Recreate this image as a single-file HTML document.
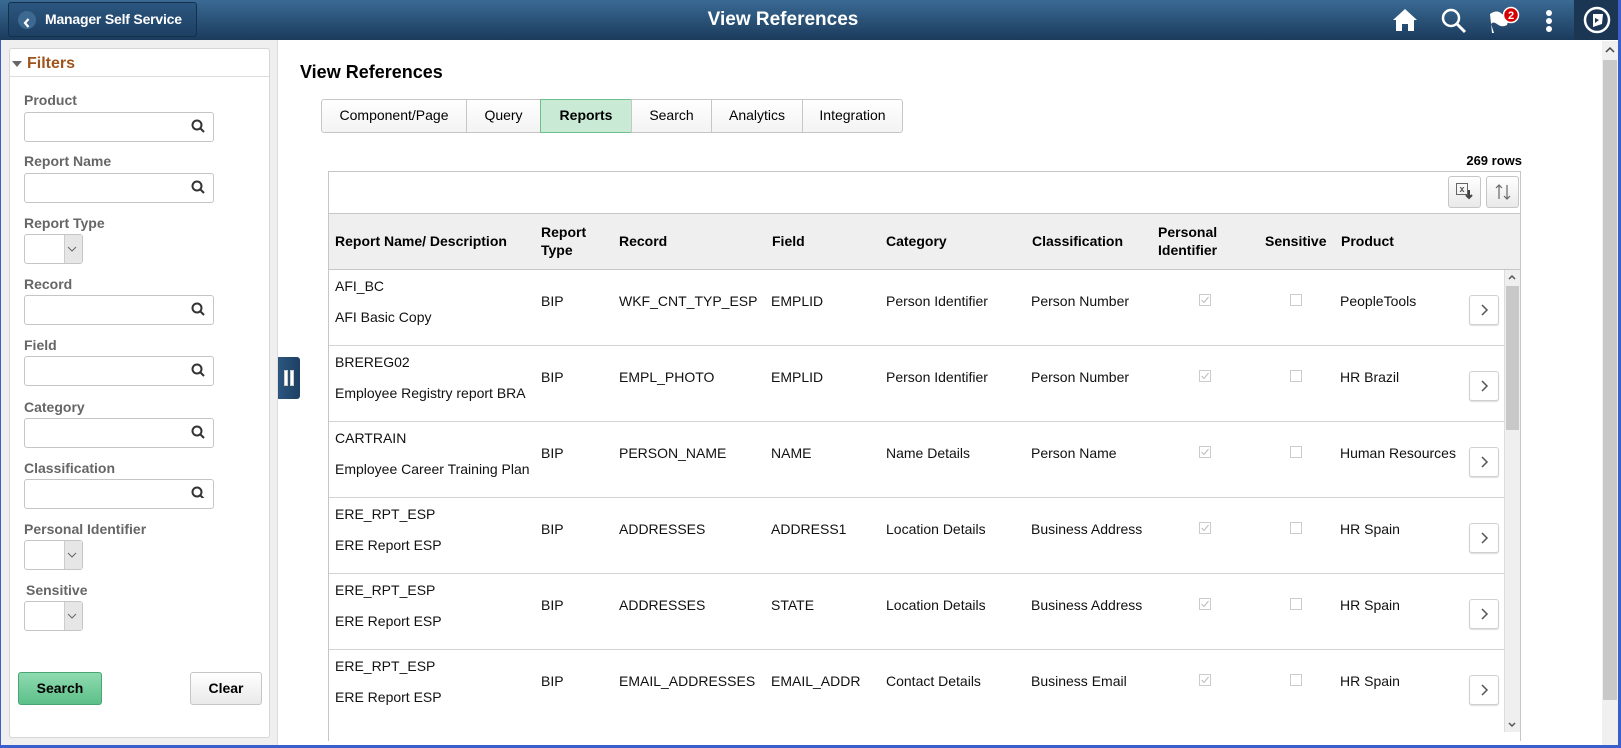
<!DOCTYPE html>
<html><head><meta charset="utf-8"><style>
*{box-sizing:border-box;margin:0;padding:0}
body{width:1621px;height:748px;overflow:hidden;font-family:"Liberation Sans",Arial,sans-serif;background:#fff;position:relative;font-size:14px;color:#000}
.abs{position:absolute}
#hdr{left:0;top:0;width:1618px;height:40px;background:linear-gradient(#3a6a94,#1b3b5c)}
#back{left:8px;top:2px;width:189px;height:35px;border:1px solid #13304c;border-radius:3px;background:linear-gradient(#2c5780,#1d3f62);color:#fff;font-weight:bold;font-size:14px;line-height:33px;padding-left:36px;white-space:nowrap;letter-spacing:-0.2px}
#back .c{position:absolute;left:9px;top:8px;width:18px;height:18px;border-radius:50%;background:#3d6890}
#title{left:0;width:1566px;top:0;text-align:center;color:#fff;font-weight:bold;font-size:19px;line-height:40px}
#left{left:0;top:40px;width:278px;height:708px;background:#efefef;border-right:1px solid #ddd}
#card{left:9px;top:48px;width:261px;height:690px;background:#fff;border:1px solid #d6d6d6;border-radius:3px}
.lbl{color:#666;font-weight:bold;font-size:14px}
.inp{width:190px;height:30px;border:1px solid #c5c5c5;border-radius:3px;background:#fff}
.sel{width:59px;height:30px;border:1px solid #c5c5c5;border-radius:3px;background:#fff}
.sel:after{content:"";position:absolute;right:0;top:0;width:17px;height:28px;background:#e6e6e6;border-left:1px solid #ccc}
.btn{border:1px solid #c6c6c6;border-radius:3px;background:linear-gradient(#fff,#e9e9e9);text-align:center;font-weight:bold;font-size:14px}
.tab{top:99px;height:34px;border:1px solid #c6c6c6;background:linear-gradient(#fff,#f3f3f3);font-size:14px;line-height:31px;text-align:center}
.th{font-weight:bold;font-size:14px;color:#000}
.cell{font-size:14px;color:#111}
.cb{width:12px;height:12px;border:1px solid #ccc;background:#fff}
.chev{width:30px;height:30px;border:1px solid #d0d0d0;border-radius:3px;background:#fff;box-shadow:0 1px 1px #ddd}
</style></head><body>
<div id="hdr" class="abs"></div>
<div id="title" class="abs">View References</div>
<div id="back" class="abs"><span class="c"><svg width="18" height="18" viewBox="0 0 18 18"><path d="M10.5 5 L7 9 L10.5 13" stroke="#fff" stroke-width="2.2" fill="none"/></svg></span>Manager Self Service</div>
<svg class="abs" style="left:1390px;top:6px" width="30" height="28" viewBox="0 0 30 28"><path d="M15 3 L3 14 L6 14 L6 25 L12 25 L12 18 L18 18 L18 25 L24 25 L24 14 L27 14 Z" fill="#fff"/></svg>
<svg class="abs" style="left:1439px;top:6px" width="30" height="28" viewBox="0 0 30 28"><circle cx="12" cy="12" r="8" stroke="#fff" stroke-width="2.5" fill="none"/><path d="M18 18 L26 26" stroke="#fff" stroke-width="3"/></svg>
<svg class="abs" style="left:1485px;top:6px" width="40" height="28" viewBox="0 0 40 28"><path d="M5 8 Q12 3 17 8 Q22 12 25 9 L22 19 Q17 22 12 18 Q8 15 6 18 L9 27 L7 27 Z" fill="#fff"/><circle cx="26" cy="9" r="7.5" fill="#d60000" stroke="#fff" stroke-width="1.5"/><text x="26" y="13" text-anchor="middle" fill="#fff" font-size="11" font-weight="bold" font-family="Liberation Sans">2</text></svg>
<div class="abs" style="left:1546px;top:10px;width:6px;height:6px;border-radius:50%;background:#fff;box-shadow:0 8px 0 #fff,0 16px 0 #fff"></div>
<div class="abs" style="left:1574px;top:0;width:44px;height:40px;background:#1a3653"></div>
<svg class="abs" style="left:1581px;top:4px" width="32" height="32" viewBox="0 0 32 32"><circle cx="16" cy="16" r="12" stroke="#fff" stroke-width="2.5" fill="none"/><path d="M12 10 L22 10 L21 20 L12 23 Z" fill="#fff"/><path d="M14 14 L18 16 L14 19 Z" fill="#1a3653"/></svg>

<div id="left" class="abs"></div>
<div id="card" class="abs"></div>
<div class="abs" style="left:10px;top:76px;width:259px;height:1px;background:#ddd"></div>
<div class="abs" style="left:12px;top:61px;width:0;height:0;border-left:5px solid transparent;border-right:5px solid transparent;border-top:6px solid #666"></div>
<div class="abs" style="left:27px;top:55px;color:#a0541c;font-weight:bold;font-size:16px">Filters</div>

<div class="abs lbl" style="left:24px;top:92px">Product</div><div class="abs inp" style="left:24px;top:112px"></div>
<div class="abs lbl" style="left:24px;top:153px">Report Name</div><div class="abs inp" style="left:24px;top:173px"></div>
<div class="abs lbl" style="left:24px;top:215px">Report Type</div><div class="abs sel" style="left:24px;top:234px"></div>
<div class="abs lbl" style="left:24px;top:276px">Record</div><div class="abs inp" style="left:24px;top:295px"></div>
<div class="abs lbl" style="left:24px;top:337px">Field</div><div class="abs inp" style="left:24px;top:356px"></div>
<div class="abs lbl" style="left:24px;top:399px">Category</div><div class="abs inp" style="left:24px;top:418px"></div>
<div class="abs lbl" style="left:24px;top:460px">Classification</div><div class="abs inp" style="left:24px;top:479px"></div>
<div class="abs lbl" style="left:24px;top:521px">Personal Identifier</div><div class="abs sel" style="left:24px;top:540px"></div>
<div class="abs lbl" style="left:26px;top:582px">Sensitive</div><div class="abs sel" style="left:24px;top:601px"></div>
<svg class="abs" style="left:190px;top:118px" width="16" height="300" viewBox="0 0 16 300"><g stroke="#333" stroke-width="2" fill="none"><circle cx="7" cy="7" r="4.5"/><path d="M10 10 L14 14"/><circle cx="7" cy="68" r="4.5"/><path d="M10 71 L14 75"/><circle cx="7" cy="190" r="4.5"/><path d="M10 193 L14 197"/><circle cx="7" cy="251" r="4.5"/><path d="M10 254 L14 258"/></g></svg>
<svg class="abs" style="left:190px;top:418px" width="16" height="80" viewBox="0 0 16 80"><g stroke="#333" stroke-width="2" fill="none"><circle cx="7" cy="13" r="4.5"/><path d="M10 16 L14 20"/><circle cx="7" cy="74" r="4.5"/><path d="M10 77 L14 81"/></g></svg>
<svg class="abs" style="left:65px;top:240px" width="14" height="380" viewBox="0 0 14 380"><g stroke="#666" stroke-width="1" fill="none"><path d="M3 7 L7 11 L11 7"/><path d="M3 313 L7 317 L11 313"/><path d="M3 374 L7 378 L11 374"/></g></svg>
<div class="abs btn" style="left:18px;top:672px;width:84px;height:33px;line-height:31px;background:linear-gradient(#8fdbb1,#5cbf88);border-color:#4aa574">Search</div>
<div class="abs btn" style="left:190px;top:672px;width:72px;height:33px;line-height:31px">Clear</div>

<div class="abs" style="left:278px;top:357px;width:22px;height:42px;background:linear-gradient(90deg,#2c5780,#1d3f62);border-radius:0 3px 3px 0"></div>
<div class="abs" style="left:284px;top:370px;width:4px;height:16px;background:#fff;border:1px solid #ccc"></div>
<div class="abs" style="left:290px;top:370px;width:4px;height:16px;background:#fff;border:1px solid #ccc"></div>

<div class="abs" style="left:300px;top:62px;font-weight:bold;font-size:18px">View References</div>
<div class="abs tab" style="left:321px;width:146px;border-radius:3px 0 0 3px">Component/Page</div>
<div class="abs tab" style="left:466px;width:75px">Query</div>
<div class="abs tab" style="left:540px;width:92px;background:#c9ebd6;border-color:#6cc08e;font-weight:bold">Reports</div>
<div class="abs tab" style="left:631px;width:81px">Search</div>
<div class="abs tab" style="left:711px;width:92px">Analytics</div>
<div class="abs tab" style="left:802px;width:101px;border-radius:0 3px 3px 0">Integration</div>
<div class="abs" style="left:1450px;top:153px;font-weight:bold;font-size:13px;width:72px;text-align:right">269 rows</div>

<div class="abs" style="left:328px;top:171px;width:1193px;height:570px;border:1px solid #c6c6c6;border-bottom:none"></div>
<div class="abs btn" style="left:1448px;top:176px;width:33px;height:32px"></div>
<div class="abs btn" style="left:1486px;top:176px;width:33px;height:32px"></div>
<svg class="abs" style="left:1454px;top:181px" width="22" height="22" viewBox="0 0 22 22"><rect x="2.5" y="2.5" width="11" height="11" fill="none" stroke="#666"/><text x="8" y="11" text-anchor="middle" font-size="9" font-weight="bold" fill="#555" font-family="Liberation Sans">x</text><path d="M15 9 L15 17 M12 14 L15 17 L18 14" stroke="#444" stroke-width="2" fill="none"/></svg>
<svg class="abs" style="left:1492px;top:181px" width="22" height="22" viewBox="0 0 22 22"><path d="M7 18 L7 4 M4 7 L7 4 L10 7 M15 4 L15 18 M12 15 L15 18 L18 15" stroke="#666" stroke-width="1.2" fill="none"/></svg>
<div class="abs" style="left:329px;top:213px;width:1191px;height:57px;background:#efefef;border-top:1px solid #c6c6c6;border-bottom:1px solid #c6c6c6"></div>
<div class="abs th" style="left:335px;top:233px">Report Name/ Description</div>
<div class="abs th" style="left:541px;top:223px;line-height:18px">Report<br>Type</div>
<div class="abs th" style="left:619px;top:233px">Record</div>
<div class="abs th" style="left:772px;top:233px">Field</div>
<div class="abs th" style="left:886px;top:233px">Category</div>
<div class="abs th" style="left:1032px;top:233px">Classification</div>
<div class="abs th" style="left:1158px;top:223px;line-height:18px">Personal<br>Identifier</div>
<div class="abs th" style="left:1265px;top:233px">Sensitive</div>
<div class="abs th" style="left:1341px;top:233px">Product</div>

<div id="rows"></div>
<div class="abs" style="left:1504px;top:270px;width:16px;height:462px;background:#efefef;border-left:1px solid #ddd"></div>
<div class="abs" style="left:1506px;top:286px;width:13px;height:144px;background:#c8c8c8"></div>
<svg class="abs" style="left:1507px;top:272px" width="10" height="10"><path d="M2 7 L5 4 L8 7" stroke="#555" stroke-width="1.5" fill="none"/></svg>
<svg class="abs" style="left:1507px;top:720px" width="10" height="10"><path d="M2 3 L5 6 L8 3" stroke="#555" stroke-width="1.5" fill="none"/></svg>

<div class="abs" style="left:1602px;top:41px;width:16px;height:707px;background:#f0f0f0"></div>
<div class="abs" style="left:1603px;top:60px;width:14px;height:640px;background:#c8c8c8"></div>
<svg class="abs" style="left:1604px;top:45px" width="12" height="10"><path d="M2 7 L6 3 L10 7" stroke="#444" stroke-width="1.5" fill="none"/></svg>
<div class="abs" style="left:1618px;top:0;width:3px;height:748px;background:#3a5fcd"></div>
<div class="abs" style="left:0;top:745px;width:1621px;height:3px;background:#3a5fcd"></div>
<div class="abs" style="left:0;top:40px;width:1px;height:708px;background:#3a5fcd"></div>

<script>
var d=[["AFI_BC","AFI Basic Copy","WKF_CNT_TYP_ESP","EMPLID","Person Identifier","Person Number","PeopleTools"],
["BREREG02","Employee Registry report BRA","EMPL_PHOTO","EMPLID","Person Identifier","Person Number","HR Brazil"],
["CARTRAIN","Employee Career Training Plan","PERSON_NAME","NAME","Name Details","Person Name","Human Resources"],
["ERE_RPT_ESP","ERE Report ESP","ADDRESSES","ADDRESS1","Location Details","Business Address","HR Spain"],
["ERE_RPT_ESP","ERE Report ESP","ADDRESSES","STATE","Location Details","Business Address","HR Spain"],
["ERE_RPT_ESP","ERE Report ESP","EMAIL_ADDRESSES","EMAIL_ADDR","Contact Details","Business Email","HR Spain"]];
var h="";
d.forEach(function(r,i){var y=269+i*76;var m=y+24;
if(i>0)h+='<div class="abs" style="left:329px;top:'+y+'px;width:1175px;height:1px;background:#d3d3d3"></div>';
h+='<div class="abs cell" style="left:335px;top:'+(y+9)+'px">'+r[0]+'</div>';
h+='<div class="abs cell" style="left:335px;top:'+(y+40)+'px">'+r[1]+'</div>';
h+='<div class="abs cell" style="left:541px;top:'+m+'px">BIP</div>';
h+='<div class="abs cell" style="left:619px;top:'+m+'px">'+r[2]+'</div>';
h+='<div class="abs cell" style="left:771px;top:'+m+'px">'+r[3]+'</div>';
h+='<div class="abs cell" style="left:886px;top:'+m+'px">'+r[4]+'</div>';
h+='<div class="abs cell" style="left:1031px;top:'+m+'px">'+r[5]+'</div>';
h+='<div class="abs cb" style="left:1199px;top:'+(y+25)+'px"><svg width="10" height="10" style="display:block"><path d="M1.5 5 L4 7.5 L8.5 2" stroke="#bbb" stroke-width="1" fill="none"/></svg></div>';
h+='<div class="abs cb" style="left:1290px;top:'+(y+25)+'px"></div>';
h+='<div class="abs cell" style="left:1340px;top:'+m+'px">'+r[6]+'</div>';
h+='<div class="abs chev" style="left:1469px;top:'+(y+26)+'px"><svg width="28" height="28" style="display:block"><path d="M12 9 L17 14 L12 19" stroke="#555" stroke-width="1.5" fill="none"/></svg></div>';
});
document.getElementById("rows").outerHTML=h;
</script>
</body></html>
